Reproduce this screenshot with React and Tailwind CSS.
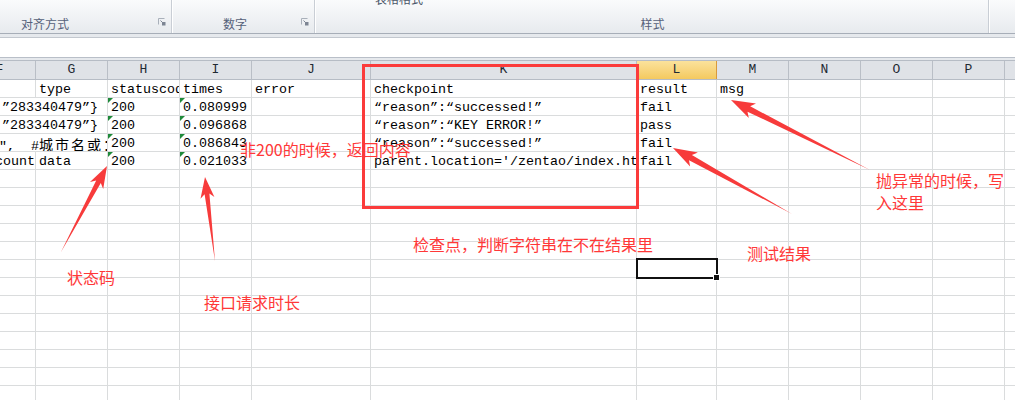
import React from "react";

const W = {
  36: "w-[36px]",
  72: "w-[72px]",
  80: "w-[80px]",
  108: "w-[108px]",
  119: "w-[119px]",
  266: "w-[266px]",
};

const COLS = [
  { k: "F", w: 36 },
  { k: "G", w: 72 },
  { k: "H", w: 72 },
  { k: "I", w: 72 },
  { k: "J", w: 119 },
  { k: "K", w: 266 },
  { k: "L", w: 80 },
  { k: "M", w: 72 },
  { k: "N", w: 72 },
  { k: "O", w: 72 },
  { k: "P", w: 72 },
  { k: "Q", w: 72 },
];

function Tri() {
  return (
    <div className="absolute left-0 top-0 w-0 h-0 border-t-[5px] border-r-[5px] border-t-[#1f8a3a] border-r-transparent" />
  );
}

function Cell({ w, children, tri, right, pl = true }) {
  return (
    <div
      className={
        "relative shrink-0 h-full border-r border-[#dadcdd] overflow-hidden whitespace-pre " +
        W[w] +
        (right ? " flex justify-end" : "")
      }
    >
      {tri && <Tri />}
      {children != null && (
        <div className={"pt-[1px] leading-[18px] " + (pl ? "pl-[3px]" : "pl-[2px]")}>{children}</div>
      )}
    </div>
  );
}

function Row({ children }) {
  return <div className="flex h-[18px] border-b border-[#dadcdd] shrink-0">{children}</div>;
}

const CJK = ({ children }) => (
  <span className="font-['Noto_Sans_CJK_SC',sans-serif] text-[14px] tracking-[2px]">{children}</span>
);

function DataRows() {
  const rows = [];
  rows.push(
    <Row key="r0">
      <Cell w={36} />
      <Cell w={72}>type</Cell>
      <Cell w={72}>statuscode</Cell>
      <Cell w={72}>times</Cell>
      <Cell w={119}>error</Cell>
      <Cell w={266}>checkpoint</Cell>
      <Cell w={80}>result</Cell>
      <Cell w={72}>msg</Cell>
      <Cell w={72} />
      <Cell w={72} />
      <Cell w={72} />
      <Cell w={72} />
    </Row>
  );
  const data = [
    { fg: "\u201d283340479\u201d}", h: "200", i: "0.080999", k: "\u201creason\u201d:\u201csuccessed!\u201d", l: "fail" },
    { fg: "\u201d283340479\u201d}", h: "200", i: "0.096868", k: "\u201creason\u201d:\u201cKEY ERROR!\u201d", l: "pass" },
    {
      fg: (
        <span className="-ml-[3px]">
          {"\u2033,  #"}
          <CJK>城市名或：</CJK>
        </span>
      ),
      h: "200",
      i: "0.086843",
      k: "\u201creason\u201d:\u201csuccessed!\u201d",
      l: "fail",
    },
  ];
  data.forEach((d, idx) => {
    rows.push(
      <Row key={"d" + idx}>
        <Cell w={108} pl={false}>{d.fg}</Cell>
        <Cell w={72} tri>{d.h}</Cell>
        <Cell w={72} tri>{d.i}</Cell>
        <Cell w={119} />
        <Cell w={266}>{d.k}</Cell>
        <Cell w={80}>{d.l}</Cell>
        <Cell w={72} />
        <Cell w={72} />
        <Cell w={72} />
        <Cell w={72} />
        <Cell w={72} />
      </Row>
    );
  });
  rows.push(
    <Row key="r4">
      <Cell w={36} right pl={false}>
        account
      </Cell>
      <Cell w={72}>data</Cell>
      <Cell w={72} tri>200</Cell>
      <Cell w={72} tri>0.021033</Cell>
      <Cell w={119} />
      <Cell w={266}>parent.location='/zentao/index.html'</Cell>
      <Cell w={80}>fail</Cell>
      <Cell w={72} />
      <Cell w={72} />
      <Cell w={72} />
      <Cell w={72} />
      <Cell w={72} />
    </Row>
  );
  for (let r = 5; r < 18; r++) {
    rows.push(
      <Row key={"e" + r}>
        {COLS.map((c) => (
          <Cell key={c.k} w={c.w} />
        ))}
      </Row>
    );
  }
  return rows;
}

function Launcher() {
  return (
    <svg width="8" height="8" viewBox="0 0 8 8" className="shrink-0">
      <path d="M0.5 6.5V0.5H6.5" fill="none" stroke="#a9b0ba" strokeWidth="1" />
      <rect x="4" y="4" width="3.5" height="3.5" fill="#7d8593" />
      <path d="M2.5 2.5L5 5" stroke="#7d8593" strokeWidth="1" />
    </svg>
  );
}

function arrowPts(tx, ty, px, py, hl = 18, hw = 7.5, sw = 2.6) {
  const dx = px - tx;
  const dy = py - ty;
  const L = Math.hypot(dx, dy);
  const ux = dx / L;
  const uy = dy / L;
  const nx = -uy;
  const ny = ux;
  const bx = px - ux * hl;
  const by = py - uy * hl;
  const b2x = px - ux * (hl + 4);
  const b2y = py - uy * (hl + 4);
  const pts = [
    [tx, ty],
    [bx + nx * sw, by + ny * sw],
    [b2x + nx * hw, b2y + ny * hw],
    [px, py],
    [b2x - nx * hw, b2y - ny * hw],
    [bx - nx * sw, by - ny * sw],
  ];
  return pts.map((p) => p[0].toFixed(1) + "," + p[1].toFixed(1)).join(" ");
}

export default function App() {
  return (
    <div className="relative w-[1015px] h-[400px] overflow-hidden bg-white font-['Liberation_Mono',monospace] text-[13.33px] text-black">
      {/* Ribbon */}
      <div className="flex h-[34px] border-b border-[#a7aeb8] bg-gradient-to-b from-[#fafbfc] to-[#e7eaee] font-['Noto_Sans_CJK_SC',sans-serif] text-[12px] text-[#56617a]">
        <div className="flex w-[172px] shrink-0 items-end justify-between pl-[21px] pr-[5px] pb-[1px] border-r border-[#c9ced5]">
          <span className="leading-[16px]">对齐方式</span>
          <div className="mb-[6px]">
            <Launcher />
          </div>
        </div>
        <div className="w-[1px] shrink-0 bg-white" />
        <div className="flex w-[142px] shrink-0 items-end justify-between pl-[50px] pr-[5px] pb-[1px] border-r border-[#c9ced5]">
          <span className="leading-[16px]">数字</span>
          <div className="mb-[6px]">
            <Launcher />
          </div>
        </div>
        <div className="w-[1px] shrink-0 bg-white" />
        <div className="relative flex w-[673px] shrink-0 flex-col justify-between overflow-hidden border-r border-[#c9ced5]">
          <span className="ml-[59px] -mt-[9px] leading-[16px] text-[#4a5568]">表格格式</span>
          <span className="self-center pl-[1px] pb-[1px] leading-[16px]">样式</span>
        </div>
        <div className="w-[1px] shrink-0 bg-white" />
        <div className="flex-1" />
      </div>
      {/* strip */}
      <div className="h-[4px] bg-[#e6e9ed] border-b border-[#c3c8cf]" />
      {/* formula bar */}
      <div className="h-[20px] bg-white border-b border-[#b9bfc8]" />
      <div className="h-[2px] bg-[#e6e9ed]" />
      {/* column headers */}
      <div className="flex h-[20px] border-t border-b border-[#b6bcc5] bg-[#dfe2e7] text-[13px] text-[#1f2a33]">
        {COLS.map((c) => {
          const sel = c.k === "L";
          return (
            <div
              key={c.k}
              className={
                "relative shrink-0 h-full border-r overflow-hidden flex justify-center " +
                W[c.w] +
                (sel
                  ? " border-[#d99a3c] bg-gradient-to-b from-[#fbe29b] to-[#f4c95e]"
                  : " border-[#b9bec6]")
              }
            >
              {c.k === "F" ? (
                <div className="-ml-[36px] w-[72px] shrink-0 text-center leading-[18px]">F</div>
              ) : (
                <span className="leading-[18px]">{c.k}</span>
              )}
            </div>
          );
        })}
      </div>
      {/* grid */}
      <div className="flex flex-col">
        <DataRows />
      </div>

      {/* selected cell */}
      <div className="absolute left-[636px] top-[258px] w-[82px] h-[21px] border-2 border-[#111]" />
      <div className="absolute left-[713px] top-[274px] w-[7px] h-[7px] bg-[#111] border border-white" />

      {/* red box */}
      <div className="absolute left-[362px] top-[64px] w-[277px] h-[145px] border-[3px] border-[#fb3b3b]" />

      {/* arrows */}
      <svg className="absolute left-0 top-0 pointer-events-none" width="1015" height="400">
        <polygon points={arrowPts(61, 252, 107, 166)} fill="#f73b3b" />
        <polygon points={arrowPts(215, 261, 205, 177, 17, 7, 2.4)} fill="#f73b3b" />
        <polygon points={arrowPts(870, 170, 731, 100, 20, 8, 3)} fill="#f73b3b" />
        <polygon points={arrowPts(792, 214, 673, 148, 20, 8, 3)} fill="#f73b3b" />
      </svg>

      {/* annotations */}
      <div className="absolute font-['Noto_Sans_CJK_SC',sans-serif] text-[16px] leading-[16px] text-[#ff3838] whitespace-nowrap left-[240px] top-[141px]">
        非200的时候，返回内容
      </div>
      <div className="absolute font-['Noto_Sans_CJK_SC',sans-serif] text-[16px] leading-[16px] text-[#ff3838] whitespace-nowrap left-[413px] top-[236px]">
        检查点，判断字符串在不在结果里
      </div>
      <div className="absolute font-['Noto_Sans_CJK_SC',sans-serif] text-[16px] leading-[16px] text-[#ff3838] whitespace-nowrap left-[747px] top-[245px]">
        测试结果
      </div>
      <div className="absolute font-['Noto_Sans_CJK_SC',sans-serif] text-[16px] leading-[16px] text-[#ff3838] whitespace-nowrap left-[67px] top-[269px]">
        状态码
      </div>
      <div className="absolute font-['Noto_Sans_CJK_SC',sans-serif] text-[16px] leading-[16px] text-[#ff3838] whitespace-nowrap left-[204px] top-[294px]">
        接口请求时长
      </div>
      <div className="absolute font-['Noto_Sans_CJK_SC',sans-serif] text-[16px] leading-[22px] text-[#ff3838] left-[876px] top-[169px] w-[132px]">
        抛异常的时候，写入这里
      </div>
    </div>
  );
}
